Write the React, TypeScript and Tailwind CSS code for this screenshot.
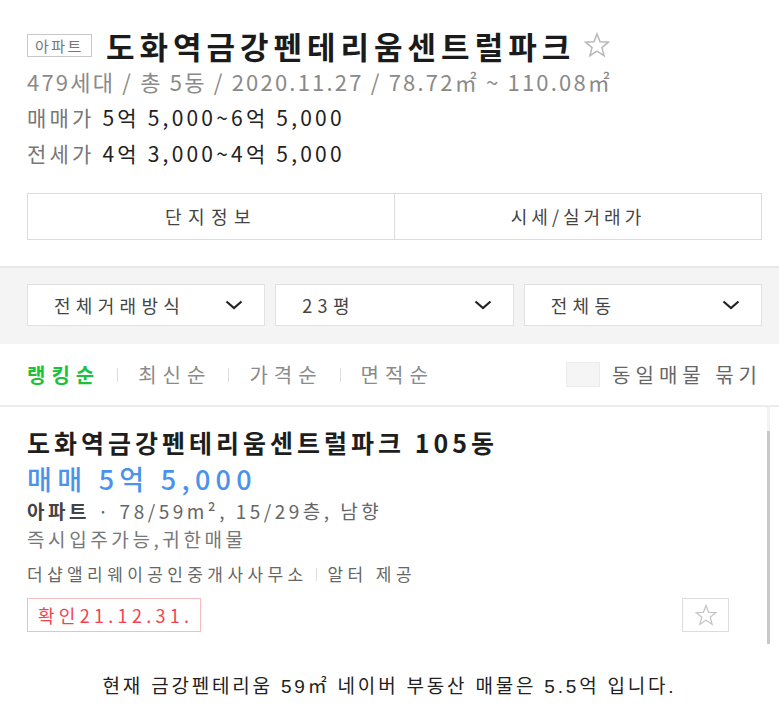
import React from 'react';

const StarIcon = ({ className }: { className?: string }) => (
  <svg viewBox="0 0 24 24" className={className} fill="none" stroke="currentColor" strokeWidth={1.3} strokeLinejoin="miter">
    <polygon points="12,2.5 14.6,9.3 21.8,9.6 16.2,14.2 18.1,21.2 12,17.2 5.9,21.2 7.8,14.2 2.2,9.6 9.4,9.3" />
  </svg>
);

const Chevron = () => (
  <svg viewBox="0 0 20 12" className="w-[20px] h-[12px] text-[#222]" fill="none" stroke="currentColor" strokeWidth={2.2}>
    <path d="M2.5 2.5L10 9L17.5 2.5" />
  </svg>
);

const selects = ['전체거래방식', '23평', '전체동'];
const sorts = ['랭킹순', '최신순', '가격순', '면적순'];

export default function App() {
  return (
    <div className="w-[779px] h-[715px] bg-white overflow-hidden text-[#222]" style={{ fontFamily: '"Noto Sans CJK KR", "Noto Sans", sans-serif' }}>
      {/* header */}
      <section className="pl-[27px] pr-[17px] pt-[29px]">
        <div className="flex items-center h-[32px]">
          <span className="border border-[#c9c9c9] text-[#777] text-[15px] leading-none px-[7px] py-[3px] tracking-[2.5px]">아파트</span>
          <h1 className="ml-[14px] text-[31px] font-bold leading-none tracking-[5px] text-[#1b1b1b]">도화역금강펜테리움센트럴파크</h1>
          <StarIcon className="ml-[8px] w-[28px] h-[28px] text-[#b9b9b9]" />
        </div>
        <p className="mt-[6px] text-[22px] leading-[28px] text-[#8a8a8a] tracking-[2.2px]">
          479세대 / 총 5동 / 2020.11.27 / 78.72㎡ ~ 110.08㎡
        </p>
        <p className="mt-[8px] text-[21px] leading-[28px] tracking-[3.2px]">
          <span className="text-[#777]">매매가 </span><span className="text-[#222]">5억 5,000~6억 5,000</span>
        </p>
        <p className="mt-[8px] text-[21px] leading-[28px] tracking-[3.2px]">
          <span className="text-[#777]">전세가 </span><span className="text-[#222]">4억 3,000~4억 5,000</span>
        </p>
        <div className="mt-[26px] flex h-[47px] border border-[#dcdcdc]">
          <button className="flex-1 text-[18px] tracking-[6.5px] text-[#444]">단지정보</button>
          <button className="flex-1 border-l border-[#dcdcdc] text-[18px] tracking-[4px] text-[#444]">시세/실거래가</button>
        </div>
      </section>

      {/* filters */}
      <section className="mt-[26px] border-t-2 border-[#e8e8e8] bg-[#f4f4f4] pl-[27px] pr-[17px] pt-[16px] pb-[18px]">
        <div className="flex gap-[10px]">
          {selects.map((s) => (
            <div key={s} className="flex-1 h-[42px] bg-white border border-[#e1e1e1] flex items-center justify-between pl-[26px] pr-[20px]">
              <span className="text-[18px] tracking-[5.3px] text-[#444]">{s}</span>
              <Chevron />
            </div>
          ))}
        </div>
      </section>

      {/* sort */}
      <section className="pl-[27px] pr-[17px] h-[63px] flex items-center border-b-2 border-[#ececec]">
        <div className="flex items-center">
          {sorts.map((s, i) => (
            <React.Fragment key={s}>
              {i > 0 && <span className="ml-[17px] mr-[20px] w-px h-[14px] bg-[#ddd]" />}
              <span className={`text-[20px] tracking-[6px] ${i === 0 ? 'text-[#19c23a] font-bold' : 'text-[#8a8a8a]'}`}>{s}</span>
            </React.Fragment>
          ))}
        </div>
        <div className="ml-auto flex items-center">
          <span className="w-[34px] h-[25px] bg-[#f5f5f5] border border-[#ececec]" />
          <span className="ml-[12px] text-[20px] tracking-[5px] text-[#666]">동일매물 묶기</span>
        </div>
      </section>

      {/* listing */}
      <section className="flex pl-[27px] pr-[9px]">
        <div className="flex-1 pt-[20px] pb-[12px]">
          <h2 className="text-[25px] font-bold leading-[30px] tracking-[4px] text-[#1e1e1e]">도화역금강펜테리움센트럴파크 105동</h2>
          <p className="mt-[6px] text-[27px] font-medium leading-[32px] tracking-[5.3px] text-[#4a92ec]">매매 5억 5,000</p>
          <p className="mt-[2px] text-[19px] leading-[28px] tracking-[3.5px] text-[#666]">
            <span className="font-bold text-[#444]">아파트</span> · 78/59m², 15/29층, 남향
          </p>
          <p className="text-[19px] leading-[28px] tracking-[3.6px] text-[#777]">즉시입주가능,귀한매물</p>
          <p className="mt-[9px] text-[17px] leading-[24px] tracking-[4.4px] text-[#666] flex items-center">
            더샵앨리웨이공인중개사사무소
            <span className="ml-[8px] mr-[11px] w-px h-[13px] bg-[#ddd]" />
            알터 제공
          </p>
          <div className="mt-[12px] flex items-center justify-between pr-[38px]">
            <span className="h-[34px] pl-[10px] pr-[7px] flex items-center border border-[#f6bcc0] text-[18px] tracking-[4.3px] text-[#f2434f]">확인21.12.31.</span>
            <button className="w-[47px] h-[34px] border border-[#dcdcdc] flex items-center justify-center">
              <StarIcon className="w-[26px] h-[24px] text-[#c6c6c6]" />
            </button>
          </div>
        </div>
        <div className="w-[3px] flex flex-col">
          <div className="h-[24px] bg-[#f2f2f2]" />
          <div className="flex-1 bg-[#c9c9c9]" />
        </div>
      </section>

      {/* caption */}
      <p className="mt-[29px] text-center text-[19px] tracking-[2.8px] text-[#222]" style={{ fontFamily: '"Liberation Sans", "Noto Sans CJK KR", sans-serif' }}>
        현재 금강펜테리움 59㎡ 네이버 부동산 매물은 5.5억 입니다.
      </p>
    </div>
  );
}
